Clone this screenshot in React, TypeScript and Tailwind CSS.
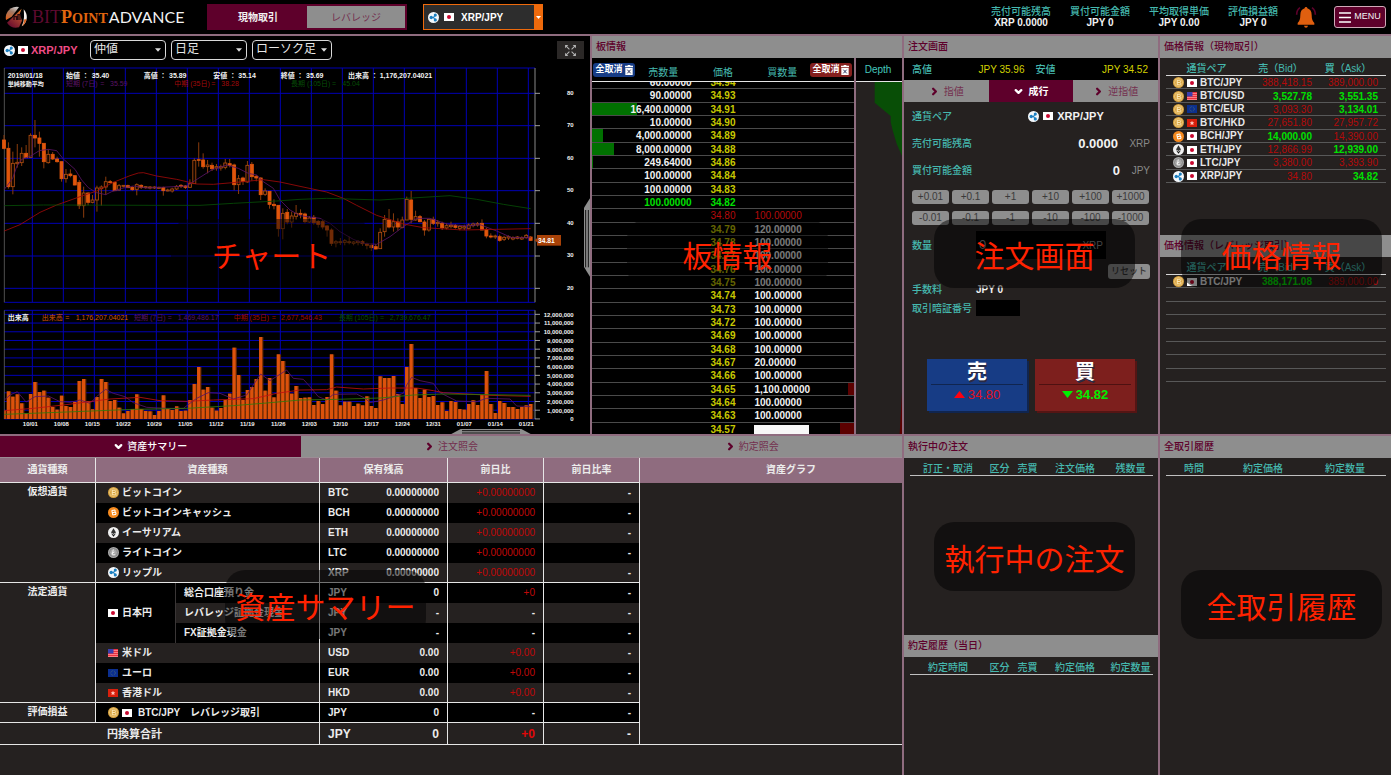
import React from "react";
import { ChevronDown, ChevronRight } from "lucide-react";

/* ---------- icons ---------- */

function CoinIcon({ coin }: { coin: string }) {
  const cls = "h-[11px] w-[11px] shrink-0";
  if (coin === "XRP")
    return (
      <svg viewBox="0 0 22 22" className={cls} aria-hidden="true">
        <circle cx="11" cy="11" r="11" fill="#f4f8fb" />
        <g fill="none" stroke="#1b7fc0" strokeWidth="2.4">
          <path d="M8 11h3l3-4.5M11 11l3 4.5" />
        </g>
        <circle cx="6.5" cy="11" r="3.4" fill="#1b7fc0" />
        <circle cx="14.6" cy="6.2" r="3.1" fill="#1b7fc0" />
        <circle cx="14.6" cy="15.8" r="3.1" fill="#1b7fc0" />
      </svg>
    );
  if (coin === "ETH")
    return (
      <svg viewBox="0 0 22 22" className={cls} aria-hidden="true">
        <circle cx="11" cy="11" r="11" fill="#f2f2f2" />
        <path d="M11 2.5 16 11l-5 3-5-3z" fill="#333" />
        <path d="m6 12.5 5 3 5-3-5 7z" fill="#111" />
      </svg>
    );
  if (coin === "LTC")
    return (
      <svg viewBox="0 0 22 22" className={cls} aria-hidden="true">
        <circle cx="11" cy="11" r="11" fill="#a9a9a9" />
        <circle cx="11" cy="11" r="8" fill="none" stroke="#7d7d7d" strokeWidth="1.5" />
        <path d="M10.5 5 8.5 15.5h6M7 12.5l6-2.5" fill="none" stroke="#f1f1f1" strokeWidth="2" />
      </svg>
    );
  const bch = coin === "BCH";
  return (
    <svg viewBox="0 0 22 22" className={cls} aria-hidden="true">
      <circle cx="11" cy="11" r="11" fill={bch ? "#f58a1f" : "#d9a441"} />
      {!bch && <circle cx="11" cy="11" r="8" fill="none" stroke="#f2d08a" strokeWidth="1.5" />}
      <path
        d="M8.5 6v10M8.5 6.5h4q2.5 0 2.5 2.2T12.5 11h-4M8.5 11h4.5q2.5 0 2.5 2.4T13 15.5H8.5"
        fill="none"
        stroke={bch ? "#fff" : "#fbe7b5"}
        strokeWidth="2"
        transform={bch ? "rotate(-12 11 11)" : undefined}
      />
    </svg>
  );
}

function Flag({ code }: { code: string }) {
  const cls = "h-[8px] w-[10px] shrink-0";
  if (code === "USD")
    return (
      <svg viewBox="0 0 20 16" preserveAspectRatio="none" className={cls} aria-hidden="true">
        <rect width="20" height="16" fill="#ff7d84" />
        <path d="M0 1h20M0 5h20M0 9h20M0 13h20" stroke="#e8323f" strokeWidth="2" />
        <rect width="11" height="9" fill="#3b3fae" />
      </svg>
    );
  if (code === "EUR")
    return (
      <svg viewBox="0 0 20 16" preserveAspectRatio="none" className={cls} aria-hidden="true">
        <rect width="20" height="16" fill="#0b2f8f" />
        <circle cx="10" cy="8" r="4.5" fill="none" stroke="#5f7a6a" strokeWidth="1.5" strokeDasharray="1.5 1.5" />
      </svg>
    );
  if (code === "HKD")
    return (
      <svg viewBox="0 0 20 16" preserveAspectRatio="none" className={cls} aria-hidden="true">
        <rect width="20" height="16" fill="#d91f0c" />
        <path d="m10 3.5 1.4 2.8 3.1.3-2.2 2.1.7 3.2-3-1.6-3 1.6.7-3.200-2.200-2.100 3.100-.3z" fill="#ffc9bf" />
      </svg>
    );
  return (
    <svg viewBox="0 0 20 16" preserveAspectRatio="none" className={cls} aria-hidden="true">
      <rect width="20" height="16" fill="#fff" />
      <circle cx="10" cy="8" r="4" fill="#c9082f" />
    </svg>
  );
}

function TrashIcon() {
  return (
    <svg viewBox="0 0 24 30" className="h-[10px] w-[8px] shrink-0" aria-hidden="true">
      <path d="M0 2h24v5H0zM8 0h8v3H8zM1 9h22v21H1z" fill="#fff" />
      <path d="m7 14 10 11M17 14 7 25" stroke="#333a66" strokeWidth="3" />
    </svg>
  );
}

function LogoMark() {
  return (
    <svg viewBox="0 0 66 66" className="h-[22px] w-[22px]" aria-hidden="true">
      <defs>
        <linearGradient id="mark-top" x1="0.6" y1="0" x2="0.2" y2="1">
          <stop offset="0" stopColor="#c9c4c0" />
          <stop offset="0.35" stopColor="#a07a68" />
          <stop offset="1" stopColor="#e0601a" />
        </linearGradient>
        <linearGradient id="mark-low" x1="0.9" y1="0" x2="0.2" y2="1">
          <stop offset="0" stopColor="#f0882a" />
          <stop offset="0.45" stopColor="#a03a2e" />
          <stop offset="1" stopColor="#66092f" />
        </linearGradient>
      </defs>
      <path d="M3 42A33 33 0 0 1 42 3L34 14 20 32z" fill="url(#mark-top)" />
      <path d="M6 50 50 8l-6 16 7 20-9 20A33 33 0 0 1 6 50z" fill="url(#mark-low)" />
      <path d="M56 10a33 33 0 0 1-6 51q7-13 7-28T56 10z" fill="#f6f0ec" />
      <path d="M58 40h7q-3 14-14 21 6-9 7-21z" fill="#d86422" />
      <path d="M27 42V32h8v10M39 42V26h6v16" fill="none" stroke="#2c0c10" strokeWidth="4" />
    </svg>
  );
}

function BellIcon() {
  return (
    <svg viewBox="0 0 60 66" className="h-[22px] w-[22px]" aria-hidden="true">
      <path d="M30 3q4 0 4 4 13 4 13 20 0 17 8 24v5H5v-5q8-7 8-24Q13 11 26 7q0-4 4-4z" fill="#e05f0f" />
      <path d="M24 59h12q-1 6-6 6t-6-6z" fill="#e05f0f" />
      <path d="M12 5Q2 12 2 26M48 5q10 7 10 21" fill="none" stroke="#5e002b" strokeWidth="5" />
    </svg>
  );
}

function ExpandIcon() {
  return (
    <svg viewBox="0 0 24 24" className="h-[13px] w-[13px]" aria-hidden="true">
      <g stroke="#b5b5b5" strokeWidth="2" fill="#b5b5b5">
        <path d="M10 10 4 4M14 10l6-6M10 14l-6 6M14 14l6 6" />
        <path d="M2 2h6L2 8zM22 2v6l-6-6zM2 22v-6l6 6zM22 22h-6l6-6z" strokeWidth="0" />
      </g>
    </svg>
  );
}

/* ---------- shared pieces ---------- */

function PanelTitle({ children }: { children: React.ReactNode }) {
  return (
    <h2 className="flex h-[22px] shrink-0 items-center bg-[#8e8e8e] px-1 pb-px text-[10px] leading-[12px] font-medium text-[#5e002b]">{children}</h2>
  );
}

function Callout({ className, children }: { className: string; children: React.ReactNode }) {
  return (
    <div
      className={
        "pointer-events-none absolute z-10 flex h-[69px] w-[201px] items-center justify-center rounded-[20px] bg-black/50 pt-[6px] text-[30px] leading-none whitespace-nowrap text-[#ff2200] " +
        className
      }
    >
      {children}
    </div>
  );
}

function PlainSelect({ value, label, width }: { value: string; label: string; width: string }) {
  return (
    <div className={"relative " + width}>
      <select
        aria-label={label}
        className="block h-[20px] w-full appearance-none rounded-[4px] border border-[#d8d8d8] bg-black pb-[2px] pl-[3px] text-[12px] leading-none text-[#e8e8e8]"
      >
        <option>{value}</option>
      </select>
      <svg viewBox="0 0 10 6" className="pointer-events-none absolute top-[8px] right-[5px] h-[4px] w-[6px]" aria-hidden="true">
        <path d="M0 0h10L5 6z" fill="#ddd" />
      </svg>
    </div>
  );
}

/* ---------- chart: three drawing units to the pixel ---------- */

const PITCH = 13.277;
const barX = (k: number) => 12 + PITCH * k;

const volumeTops = [
  332, 274, 290, 283, 310, 340, 282, 246, 276, 272, 293, 321, 329, 287, 318, 321, 306, 243, 237, 304, 328, 291, 237, 246, 303, 300, 323, 340, 333,
  327, 283, 327, 333, 334, 345, 333, 286, 327, 330, 319, 333, 332, 300, 252, 201, 269, 261, 323, 332, 324, 300, 281, 143, 225, 300, 270, 261, 237,
  111, 272, 234, 292, 163, 183, 222, 281, 258, 294, 293, 292, 315, 303, 312, 291, 163, 272, 316, 305, 305, 318, 311, 316, 289, 318, 324, 229, 234,
  234, 228, 282, 312, 201, 132, 264, 294, 269, 291, 288, 315, 307, 333, 303, 306, 327, 329, 312, 301, 315, 285, 213, 312, 339, 303, 309, 321, 321,
  327, 321, 316, 312,
];

/* high, body top, body bottom, low, falling */
const candles: number[][] = [
  [225, 240, 265, 268, 1], [247, 265, 380, 386, 1], [275, 310, 380, 403, 0], [252, 307, 311, 323, 0], [262, 280, 308, 318, 0],
  [255, 280, 293, 293, 1], [220, 226, 292, 292, 0], [180, 226, 234, 262, 1], [215, 234, 250, 290, 1], [250, 250, 305, 325, 1],
  [268, 283, 308, 311, 0], [276, 283, 297, 300, 1], [290, 297, 305, 308, 1], [305, 305, 356, 365, 1], [327, 343, 356, 368, 0],
  [328, 342, 347, 352, 1], [346, 347, 375, 376, 1], [360, 367, 437, 447, 1], [380, 399, 437, 473, 0], [397, 399, 427, 436, 1],
  [405, 420, 427, 430, 0], [377, 384, 420, 455, 0], [376, 381, 386, 437, 0], [350, 365, 381, 405, 0], [360, 365, 368, 370, 1],
  [367, 367, 392, 393, 1], [372, 377, 390, 392, 0], [375, 376, 379, 382, 0], [374, 377, 383, 384, 1], [379, 382, 389, 392, 1],
  [370, 374, 388, 406, 0], [373, 376, 382, 387, 1], [378, 380, 383, 386, 0], [378, 381, 384, 388, 0], [379, 381, 384, 387, 0],
  [380, 382, 385, 387, 0], [380, 383, 392, 407, 1], [386, 390, 393, 394, 0], [383, 387, 393, 398, 0], [375, 379, 387, 390, 0],
  [372, 376, 379, 384, 1], [375, 378, 382, 387, 1], [358, 371, 382, 384, 0], [295, 301, 371, 371, 0], [247, 299, 301, 320, 1],
  [280, 300, 320, 326, 1], [300, 315, 320, 340, 0], [308, 316, 326, 333, 1], [312, 320, 324, 332, 0], [314, 320, 324, 332, 0],
  [297, 309, 322, 328, 0], [297, 311, 316, 322, 1], [311, 315, 374, 391, 1], [345, 356, 374, 402, 0], [350, 354, 364, 375, 1],
  [303, 316, 366, 368, 0], [306, 313, 350, 362, 1], [345, 349, 354, 364, 1], [352, 354, 404, 420, 1], [385, 393, 403, 408, 0],
  [393, 394, 433, 446, 1], [418, 433, 437, 448, 1], [435, 436, 506, 530, 1], [445, 460, 506, 538, 0], [447, 457, 486, 493, 1],
  [455, 468, 486, 503, 0], [435, 460, 469, 480, 0], [448, 460, 463, 475, 1], [458, 462, 485, 490, 1], [468, 474, 486, 489, 0],
  [465, 472, 488, 494, 1], [480, 484, 493, 503, 1], [480, 485, 501, 508, 1], [495, 498, 510, 530, 1], [505, 510, 550, 558, 1],
  [540, 545, 549, 562, 0], [534, 545, 548, 555, 0], [537, 542, 547, 556, 0], [530, 545, 548, 553, 0], [543, 546, 550, 556, 0],
  [540, 544, 548, 556, 0], [540, 545, 551, 558, 1], [548, 552, 556, 568, 1], [550, 556, 563, 573, 1], [553, 560, 567, 568, 1],
  [505, 517, 566, 566, 0], [465, 478, 515, 530, 0], [447, 480, 501, 505, 1], [460, 485, 501, 515, 0], [475, 486, 501, 512, 1],
  [470, 480, 502, 505, 0], [410, 418, 480, 480, 0], [393, 420, 478, 490, 1], [452, 470, 480, 482, 0], [465, 470, 485, 487, 1],
  [480, 486, 510, 527, 1], [476, 478, 510, 515, 0], [470, 478, 490, 495, 1], [480, 487, 491, 500, 0], [485, 490, 503, 510, 1],
  [490, 497, 504, 508, 0], [485, 496, 500, 505, 0], [492, 497, 502, 506, 1], [495, 499, 505, 511, 0], [494, 500, 504, 510, 0],
  [490, 495, 505, 508, 0], [488, 492, 497, 502, 0], [486, 491, 495, 500, 0], [478, 490, 510, 511, 1], [503, 508, 528, 535, 1],
  [520, 528, 531, 535, 1], [524, 528, 531, 537, 0], [524, 530, 541, 545, 1], [527, 532, 538, 543, 0], [526, 530, 534, 540, 0],
  [529, 533, 537, 541, 0], [528, 531, 535, 538, 0], [529, 533, 537, 540, 0], [522, 526, 533, 536, 0], [528, 531, 541, 543, 1],
];

const priceLines: [string, string][] = [
  [
    "#5a1466",
    "13,388 38,355 50,320 65,298 92,288 118,272 145,268 170,272 190,297 225,328 245,360 265,383 290,398 317,404 335,395 365,385 400,378 440,384 560,378 600,352 635,330 680,315 715,325 745,340 770,345 790,365 820,385 840,420 870,450 900,467 960,475 990,490 1020,515 1060,538 1090,550 1130,553 1170,530 1210,500 1250,475 1290,475 1340,492 1400,498 1440,494 1490,513 1535,533 1592,533",
  ],
  [
    "#a00a0a",
    "13,513 60,494 120,457 170,435 240,410 290,393 340,367 390,347 415,339 430,338 470,348 530,358 590,372 640,373 720,366 790,359 840,366 900,379 980,396 1030,415 1070,436 1130,466 1180,482 1210,492 1270,503 1390,510 1490,508 1592,506",
  ],
  ["#064d06", "13,437 130,435 470,436 600,436 700,430 830,423 900,418 980,415 1140,420 1220,415 1350,407 1430,418 1510,433 1592,446"],
];

const volumeLines: [string, string][] = [
  [
    "#5a1466",
    "13,300 30,285 52,275 78,306 105,290 145,288 180,305 210,307 240,300 270,310 295,285 317,268 340,280 375,290 400,308 440,322 500,325 550,325 590,295 625,278 660,280 700,297 740,285 770,240 782,222 810,242 860,210 880,235 910,238 930,260 955,290 980,300 1000,283 1070,282 1095,295 1110,308 1150,300 1180,290 1210,280 1220,255 1235,232 1260,242 1300,250 1320,278 1370,303 1430,305 1460,295 1530,297 1550,318 1592,320",
  ],
  [
    "#c01010",
    "13,332 100,325 190,315 330,297 420,292 480,302 560,304 640,300 760,296 830,280 900,270 980,269 1010,261 1090,267 1170,264 1250,264 1300,272 1330,278 1470,286 1592,289",
  ],
  ["#2f7a0a", "13,343 200,336 400,328 560,325 700,317 800,309 900,300 1010,298 1140,294 1240,285 1330,282 1470,284 1592,286"],
];

const chartDates = [
  "10/01", "10/08", "10/15", "10/22", "10/29", "11/05", "11/12", "11/19", "11/26", "12/03", "12/10", "12/17", "12/24", "12/31", "01/07", "01/14", "01/21",
];

const W = "#f2f2f2";
const chartCaptions: [number, number, string, string][] = [
  [23, 233, W, "2019/01/18"],
  [198, 233, W, "始値 ："],
  [275, 233, W, "35.40"],
  [431, 233, W, "高値 ："],
  [507, 233, W, "35.89"],
  [640, 233, W, "安値 ："],
  [715, 233, W, "35.14"],
  [842, 233, W, "終値 ："],
  [918, 233, W, "35.69"],
  [1044, 233, W, "出来高 ："],
  [1139, 233, W, "1,176,207.04021"],
  [23, 259, W, "単純移動平均"],
  [198, 259, "#5a1466", "短期 (7日)"],
  [301, 259, "#5a1466", "="],
  [330, 259, "#5a1466", "35.59"],
  [523, 259, "#a00a0a", "中期 (35日)"],
  [634, 259, "#a00a0a", "="],
  [664, 259, "#a00a0a", "38.28"],
  [873, 259, "#064d06", "長期 (105日)"],
  [996, 259, "#064d06", "="],
  [1027, 259, "#064d06", "45.04"],
  [23, 960, W, "出来高"],
  [125, 960, "#d4550f", "出来高"],
  [196, 960, "#d4550f", "="],
  [227, 960, "#d4550f", "1,176,207.04021"],
  [402, 960, "#5a1466", "短期 (7日)"],
  [503, 960, "#5a1466", "="],
  [533, 960, "#5a1466", "1,469,486.17"],
  [701, 960, "#a00a0a", "中期 (35日)"],
  [815, 960, "#a00a0a", "="],
  [843, 960, "#a00a0a", "2,677,546.43"],
  [1016, 960, "#064d06", "長期 (105日)"],
  [1140, 960, "#064d06", "="],
  [1169, 960, "#064d06", "2,739,676.47"],
];

function Chart() {
  const columns = chartDates.map((_, i) => 97 + 93 * i);
  return (
    <svg viewBox="0 192 1770 1110" className="block h-auto w-full" role="img" aria-label="XRP/JPY チャート">
      <g stroke="#0000b4" strokeWidth="3">
        {columns.map((x) => (
          <path key={x} d={`M${x} 204V907M${x} 931V1257`} />
        ))}
        {[204, 280, 377, 475, 572, 670, 768, 865, 907, 931].map((y) => (
          <path key={y} d={`M13 ${y}H1605`} />
        ))}
        {Array.from({ length: 13 }, (_, i) => (
          <path key={i} d={`M13 ${943 + i * 26.15}H1605`} />
        ))}
      </g>
      <path d="M13 204V907M13 931V1257" stroke="#777" strokeWidth="2" />

      <g transform="translate(0 180)">
        {candles.map(([hi, top, bottom, lo, falling], k) => {
          const x = barX(k);
          return (
            <g key={k} strokeWidth="2.5">
              <path d={`M${x} ${hi}V${top}M${x} ${bottom}V${lo}`} stroke="#8a3c0c" strokeWidth="3" />
              <rect
                x={x - 4.5}
                y={top}
                width="9"
                height={Math.max(2, bottom - top)}
                fill={falling ? "#e0560c" : "#120600"}
                stroke={falling ? "#e0560c" : "#b04e10"}
              />
            </g>
          );
        })}
        {priceLines.map(([color, points]) => (
          <polyline key={color} points={points} fill="none" stroke={color} strokeWidth="2.5" />
        ))}
      </g>

      <g transform="translate(0 900)">
        {volumeTops.map((top, k) => {
          const x = Math.max(13, barX(k) - 5);
          return (
            <g key={k}>
              <rect x={x} y={top} width={k ? 13 : 6} height={357 - top} fill="#6b2a04" />
              <rect x={x} y={top} width={k ? 9.5 : 4} height={357 - top} fill="#dc520c" />
            </g>
          );
        })}
        {volumeLines.map(([color, points]) => (
          <polyline key={color} points={points} fill="none" stroke={color} strokeWidth="2.5" />
        ))}
      </g>

      <path d="M1605 204V907M1605 931V1257" stroke="#666" strokeWidth="4" />
      <g stroke="#bbb" strokeWidth="2.5">
        {[280, 377, 475, 572, 670, 768, 865].map((y) => (
          <path key={y} d={`M1605 ${y}H1620`} />
        ))}
        {Array.from({ length: 13 }, (_, i) => (
          <path key={i} d={`M1605 ${943 + i * 26.15}H1620`} />
        ))}
      </g>
      <g fill="#f2f2f2" fontSize="18" fontWeight="700">
        {[80, 70, 60, 50, 40, 30, 20].map((p, i) => (
          <text key={p} x="1721" y={284 + i * 97.5} textAnchor="end">
            {p}
          </text>
        ))}
        {Array.from({ length: 13 }, (_, i) => (
          <text key={i} x="1721" y={950 + i * 26.15} textAnchor="end">
            {((12 - i) * 1000000).toLocaleString("en-US")}
          </text>
        ))}
        {chartDates.map((d, i) => (
          <text key={d} x={91 + 93 * i} y="1277" textAnchor="middle">
            {d}
          </text>
        ))}
      </g>
      <rect x="1611" y="705" width="72" height="32" fill="#a84208" />
      <path d="m1603 721 8-6v12z" fill="#a84208" />
      <text x="1614" y="728" fill="#fff" fontSize="20" fontWeight="700">
        34.81
      </text>
      {chartCaptions.map(([x, y, color, text]) => (
        <text key={`${x}-${y}`} x={x} y={y} fill={color} fontSize={text.includes("純") ? 18 : 21} fontWeight={color === W ? 700 : 400}>
          {text}
        </text>
      ))}

      <path d="m1770 595-18 28v178l18 29z" fill="#8e8e8e" />
      <path d="M1757 630V802M1765 630V802" stroke="#111" strokeWidth="3" />
      <path d="m1354 1302 28-15h182l28 15z" fill="#8e8e8e" />
      <path d="M1386 1292H1560M1386 1299H1560" stroke="#111" strokeWidth="3" />
    </svg>
  );
}

/* ---------- header ---------- */

const balances = [
  ["売付可能残高", "XRP 0.0000"],
  ["買付可能金額", "JPY 0"],
  ["平均取得単価", "JPY 0.00"],
  ["評価損益額", "JPY 0"],
];

function Header() {
  return (
    <header className="flex h-[36px] shrink-0 items-center border-b-2 border-[#8f6c7f] bg-black pr-[5px] pl-[5px]">
      <a href="#" className="flex w-[202px] items-center gap-[5px]" aria-label="BITPoint ADVANCE">
        <LogoMark />
        <span className="flex items-baseline text-[18px] leading-none">
          <span className="font-[Liberation_Serif,serif] text-[#5e0a30]">BIT</span>
          <span className="font-[Liberation_Serif,serif] font-bold text-[#e2660f]">P</span>
          <span className="font-[Liberation_Serif,serif] text-[14px] font-bold text-[#e2660f]">OINT</span>
          <span className="pl-px font-[Lato,sans-serif] text-[16px] text-[#f2f2f2]">ADVANCE</span>
        </span>
      </a>
      <div className="grid h-[26px] w-[200px] grid-cols-2 border-2 border-[#5e002b] bg-[#5e002b] text-[10px]">
        <button type="button" className="font-bold text-[#f2f2f2]">
          現物取引
        </button>
        <button type="button" className="bg-[#8e8e8e] text-[#74304f]">
          レバレッジ
        </button>
      </div>
      <div className="relative ml-[16px] flex h-[26px] w-[120px] items-center gap-[5px] border border-[#ee6a0c] bg-[#2d2d2d] pl-[4px]">
        <CoinIcon coin="XRP" />
        <Flag code="JPY" />
        <select aria-label="通貨ペア" className="h-full min-w-0 flex-1 appearance-none bg-transparent pl-[2px] text-[10px] font-bold text-white">
          <option>XRP/JPY</option>
        </select>
        <span className="flex h-full w-[8px] items-center justify-center bg-[#ee6a0c]">
          <svg viewBox="0 0 10 6" className="h-[3px] w-[5px]" aria-hidden="true">
            <path d="M0 0h10L5 6z" fill="#fff" />
          </svg>
        </span>
      </div>
      <dl className="ml-auto flex gap-[19px] text-center text-[10px] leading-[11px] whitespace-nowrap">
        {balances.map(([name, value]) => (
          <div key={name}>
            <dt className="font-medium text-[#45b8ae]">{name}</dt>
            <dd className="font-bold text-[#f2f2f2]">{value}</dd>
          </div>
        ))}
      </dl>
      <button type="button" aria-label="お知らせ" className="ml-[17px]">
        <BellIcon />
      </button>
      <button
        type="button"
        className="ml-[17px] flex h-[22px] w-[52px] items-center justify-center gap-[3px] rounded-[3px] border border-[#cfa9b8] bg-[#5e002b] text-[9px] text-[#f2f2f2]"
      >
        <svg viewBox="0 0 12 11" className="h-[11px] w-[12px]" aria-hidden="true">
          <path d="M0 1h12M0 5.5h12M0 10h12" stroke="#fff" strokeWidth="1.5" />
        </svg>
        MENU
      </button>
    </header>
  );
}

/* ---------- order book ---------- */

type BookRow = { sell?: string; price: string; buy?: string; tone?: "best-ask" | "best-bid" };

const bookRows: BookRow[] = [
  { sell: "60.00000", price: "34.94" },
  { sell: "90.00000", price: "34.93" },
  { sell: "16,400.00000", price: "34.91" },
  { sell: "10.00000", price: "34.90" },
  { sell: "4,000.00000", price: "34.89" },
  { sell: "8,000.00000", price: "34.88" },
  { sell: "249.64000", price: "34.86" },
  { sell: "100.00000", price: "34.84" },
  { sell: "100.00000", price: "34.83" },
  { sell: "100.00000", price: "34.82", tone: "best-ask" },
  { price: "34.80", buy: "100.00000", tone: "best-bid" },
  { price: "34.79", buy: "120.00000" },
  { price: "34.78", buy: "100.00000" },
  { price: "34.77", buy: "100.00000" },
  { price: "34.76", buy: "100.00000" },
  { price: "34.75", buy: "100.00000" },
  { price: "34.74", buy: "100.00000" },
  { price: "34.73", buy: "100.00000" },
  { price: "34.72", buy: "100.00000" },
  { price: "34.69", buy: "100.00000" },
  { price: "34.68", buy: "100.00000" },
  { price: "34.67", buy: "20.00000" },
  { price: "34.66", buy: "100.00000" },
  { price: "34.65", buy: "1,100.00000" },
  { price: "34.64", buy: "100.00000" },
  { price: "34.63", buy: "100.00000" },
  { price: "34.57" },
];

const toNumber = (s?: string) => Number((s ?? "0").replace(/,/g, ""));

function OrderBook() {
  const head = "flex h-[14px] w-[42px] shrink-0 items-center justify-center gap-[2px] rounded-[3px] text-[9px] leading-none font-bold text-white ";
  return (
    <section className="relative flex min-w-0 flex-1 flex-col">
      <PanelTitle>板情報</PanelTitle>
      <div className="flex min-h-0 flex-1">
        <div className="flex min-w-0 flex-1 flex-col bg-black">
          <div className="grid h-[24px] shrink-0 grid-cols-[100fr_63fr_100fr] border-b border-[#e6e6e6] text-[10px] text-[#45b8ae]">
            <div className="flex items-center pl-px">
              <button type="button" className={head + "bg-[#173c85]"}>
                全取消
                <TrashIcon />
              </button>
              <span className="flex-1 pt-[5px] text-center">売数量</span>
            </div>
            <span className="flex items-center justify-center pt-[5px]">価格</span>
            <div className="flex items-center pr-[2px]">
              <span className="flex-1 pt-[5px] text-center">買数量</span>
              <button type="button" className={head + "bg-[#85201e]"}>
                全取消
                <TrashIcon />
              </button>
            </div>
          </div>
          <div className="h-[352px] overflow-hidden">
            <table className="-mt-[6px] h-[360px] w-full table-fixed border-separate border-spacing-0 text-[10px] leading-[10px] font-bold text-[#f2f2f2]">
              <colgroup>
                <col className="w-[38%]" />
                <col className="w-[24%]" />
                <col className="w-[38%]" />
              </colgroup>
              <tbody>
                {bookRows.map((r) => {
                  const tone =
                    r.tone === "best-ask" ? "text-[#00e000]" : r.tone === "best-bid" ? "font-normal text-[#b40a0a]" : "";
                  const buyBar = toNumber(r.buy) >= 1000 ? 6 : r.buy ? 0 : 14;
                  return (
                    <tr key={r.price} className={tone}>
                      <td className="relative border-b border-[#4a4a4a] p-0 pt-[2px] text-right">
                        <span className="absolute inset-y-0 left-0 bg-[#007000]" style={{ width: Math.floor(toNumber(r.sell) / 364 + 0.4) }} />
                        <span className="relative">{r.sell}</span>
                      </td>
                      <td className={"border-b border-[#4a4a4a] p-0 pt-[2px] text-center " + (r.tone ? "" : "text-[#c8c800]")}>{r.price}</td>
                      <td className="relative border-b border-[#4a4a4a] p-0 pt-[2px]">
                        {!r.sell && <span className="absolute inset-y-0 right-0 bg-[#5c0000]" style={{ width: buyBar }} />}
                        {r.buy ?? <span className={r.sell ? "" : "block h-[10px] w-[55px] bg-[#f7f7f7]"} />}
                      </td>
                    </tr>
                  );
                })}
              </tbody>
            </table>
          </div>
        </div>
        <div className="flex w-[48px] shrink-0 flex-col border-l-2 border-[#8f6c7f] bg-[#252120]">
          <div className="flex h-[24px] shrink-0 items-center justify-center border-b border-[#e6e6e6] bg-black pr-[2px] text-[10px] text-[#45c8be]">
            Depth
          </div>
          <svg viewBox="0 0 138 1055" preserveAspectRatio="none" className="block h-[352px] w-full" aria-label="Depth" role="img">
            <path d="M56 0H138V222L122 185 110 145 104 120V102L56 62z" fill="#084e06" />
            <path d="M138 930 131 1055H138z" fill="#5c0000" />
          </svg>
        </div>
      </div>
      <Callout className="top-[183px] left-[35px]">板情報</Callout>
    </section>
  );
}

/* ---------- order entry ---------- */

const steps = ["+0.01", "+0.1", "+1", "+10", "+100", "+1000", "-0.01", "-0.1", "-1", "-10", "-100", "-1000"];

function OrderEntry() {
  return (
    <section className="relative flex h-[398px] flex-col bg-[#252120] text-[10px]">
      <PanelTitle>注文画面</PanelTitle>
      <div className="grid h-[22px] shrink-0 grid-cols-2 items-center gap-[11px] bg-black px-2 pr-[10px] font-medium">
        <div className="flex justify-between text-[#45b8ae]">
          高値<span className="text-[#d2d200]">JPY 35.96</span>
        </div>
        <div className="flex justify-between text-[#45b8ae]">
          安値<span className="text-[#d2d200]">JPY 34.52</span>
        </div>
      </div>
      <div className="grid h-[22px] shrink-0 grid-cols-3 bg-[#8e8e8e] text-[#74304f]">
        <button type="button" className="flex items-center justify-center gap-1">
          <ChevronRight size={11} strokeWidth={5} color="#5e002b" />
          指値
        </button>
        <button type="button" className="flex items-center justify-center gap-1 bg-[#5e002b] font-bold text-white">
          <ChevronDown size={11} strokeWidth={5} />
          成行
        </button>
        <button type="button" className="flex items-center justify-center gap-1">
          <ChevronRight size={11} strokeWidth={5} color="#5e002b" />
          逆指値
        </button>
      </div>
      <div className="flex flex-col px-2 font-medium text-[#45b8ae]">
        <div className="flex h-[28px] items-center">
          <span className="w-[64px]">通貨ペア</span>
          <span className="flex flex-1 items-center justify-center gap-[4px] pl-[6px] text-[11px] font-bold text-[#f2f2f2]">
            <CoinIcon coin="XRP" />
            <Flag code="JPY" />
            XRP/JPY
          </span>
        </div>
        <div className="flex h-[27px] items-center">
          売付可能残高
          <span className="ml-auto text-[13px] font-bold text-[#f2f2f2]">0.0000</span>
          <span className="w-[32px] text-right text-[#8a8a8a]">XRP</span>
        </div>
        <div className="flex h-[27px] items-center">
          買付可能金額
          <span className="ml-auto text-[13px] font-bold text-[#f2f2f2]">0</span>
          <span className="w-[30px] text-right text-[#8a8a8a]">JPY</span>
        </div>
        <div className="mt-[6px] mr-px grid grid-cols-6 gap-x-[3px] gap-y-[7px]">
          {steps.map((s) => (
            <button key={s} type="button" className="h-[14px] rounded-[3px] bg-[#8e8e8e] text-[10px] leading-[12px] text-[#3a3a3a]">
              {s}
            </button>
          ))}
        </div>
        <div className="mt-[6px] flex h-[28px] items-center">
          <label htmlFor="qty" className="w-[64px]">
            数量
          </label>
          <div className="flex h-full w-[130px] items-center bg-black px-[3px] text-[#8a8a8a]">
            <input id="qty" defaultValue="0" className="w-full min-w-0 bg-transparent text-[13px] text-[#8a8a8a]" />
            <span>XRP</span>
          </div>
        </div>
        <button type="button" className="mt-[5px] h-[15px] w-[42px] self-end rounded-[3px] bg-[#8e8e8e] text-[9px] leading-none text-[#333]">
          リセット
        </button>
        <div className="flex h-[20px] items-center">
          <span className="w-[64px]">手数料</span>
          <span className="font-bold text-[#f2f2f2]">JPY 0</span>
        </div>
        <div className="mt-px flex h-[16px] items-center">
          <label htmlFor="pin" className="w-[64px] whitespace-nowrap">
            取引暗証番号
          </label>
          <input id="pin" type="password" className="h-[16px] w-[44px] bg-black px-1 text-white" />
        </div>
      </div>
      <div className="mt-[43px] flex justify-center gap-[8px]">
        <button type="button" className="flex h-[52px] w-[100px] flex-col items-center bg-[#173c85] px-1 shadow-[2px_2px_0_#10254f]">
          <span className="flex h-[26px] w-full items-center justify-center border-b border-[#10254f] text-[20px] leading-none font-bold text-white [text-shadow:1px_2px_0_#2a2a44]">
            売
          </span>
          <span className="flex flex-1 items-center gap-[3px] pb-[7px] text-[13px] leading-none text-[#e01020]">
            <svg viewBox="0 0 11 7" className="h-[7px] w-[11px]" aria-hidden="true">
              <path d="M0 7h11L5.5 0z" fill="#ff0010" />
            </svg>
            34.80
          </span>
        </button>
        <button type="button" className="flex h-[52px] w-[100px] flex-col items-center bg-[#7d1f1d] px-1 shadow-[2px_2px_0_#541514]">
          <span className="flex h-[26px] w-full items-center justify-center border-b border-[#4e1111] text-[20px] leading-none font-bold text-white [text-shadow:1px_2px_0_#2a2a44]">
            買
          </span>
          <span className="flex flex-1 items-center gap-[3px] pb-[7px] text-[13px] leading-none font-bold text-[#00f000]">
            <svg viewBox="0 0 11 7" className="h-[7px] w-[11px]" aria-hidden="true">
              <path d="M0 0h11L5.5 7z" fill="#00f000" />
            </svg>
            34.82
          </span>
        </button>
      </div>
      <Callout className="top-[183px] left-[30px]">注文画面</Callout>
    </section>
  );
}

/* ---------- price lists ---------- */

const spot = [
  ["BTC", "JPY", "388,418.15", "389,000.00", "dd"],
  ["BTC", "USD", "3,527.78", "3,551.35", "uu"],
  ["BTC", "EUR", "3,093.30", "3,134.01", "du"],
  ["BTC", "HKD", "27,651.80", "27,957.72", "dd"],
  ["BCH", "JPY", "14,000.00", "14,390.00", "ud"],
  ["ETH", "JPY", "12,866.99", "12,939.00", "du"],
  ["LTC", "JPY", "3,380.00", "3,393.90", "dd"],
  ["XRP", "JPY", "34.80", "34.82", "du"],
];
const leverage = [["BTC", "JPY", "388,171.08", "389,000.00", "ud"], ...Array.from({ length: 7 }, () => ["", "", "", "", "dd"])];

function PriceTable({ rows }: { rows: string[][] }) {
  const tone = (c: string) => (c === "u" ? "font-bold text-[#00e000]" : "text-[#b40a0a]");
  return (
    <div className="pr-[5px] pl-[6px]">
      <table className="h-[125px] w-full table-fixed border-separate border-spacing-0 text-[10px] leading-[10px]">
        <colgroup>
          <col className="w-[81px]" />
          <col />
          <col className="w-[74px]" />
        </colgroup>
        <thead className="text-[#45b8ae]">
          <tr className="h-[18px]">
            <th className="border-b border-[#d6d6d6] p-0 pt-[5px] font-medium">通貨ペア</th>
            <th className="border-b border-[#d6d6d6] p-0 pt-[5px] pl-[2px] font-medium">売（Bid）</th>
            <th className="border-b border-[#d6d6d6] p-0 pt-[5px] pr-[2px] font-medium">買（Ask）</th>
          </tr>
        </thead>
        <tbody>
          {rows.map(([coin, ccy, bid, ask, dir], i) => (
            <tr key={i} className="h-[13px]">
              <td className="border-b border-[#585858] p-0 pt-px pl-[7px]">
                {coin && (
                  <span className="flex items-center gap-[3px] font-bold whitespace-nowrap text-[#e8e8e8]">
                    <CoinIcon coin={coin} />
                    <Flag code={ccy} />
                    {coin}/{ccy}
                  </span>
                )}
              </td>
              <td className={"border-b border-[#585858] p-0 pt-[2px] text-right " + tone(dir[0])}>{bid}</td>
              <td className={"border-b border-[#585858] p-0 pt-[2px] pr-[8px] text-right " + tone(dir[1])}>{ask}</td>
            </tr>
          ))}
        </tbody>
      </table>
    </div>
  );
}

/* ---------- empty history tables ---------- */

function HeadOnlyTable({ heads, cols }: { heads: string[]; cols: string[] }) {
  return (
    <div className="pr-[5px] pl-[6px]">
      <table className="w-full table-fixed border-separate border-spacing-0 text-[10px] leading-[10px] text-[#45b8ae]">
        <colgroup>
          {cols.map((c, i) => (
            <col key={i} className={c} />
          ))}
        </colgroup>
        <thead>
          <tr className="h-[18px]">
            {heads.map((h) => (
              <th key={h} className="border-b border-[#c0c0c0] p-0 pt-[5px] font-medium whitespace-nowrap">
                {h}
              </th>
            ))}
          </tr>
        </thead>
      </table>
    </div>
  );
}

/* ---------- asset summary ---------- */

type AssetRow = {
  group?: [string, number];
  coin?: string;
  flag?: string;
  name?: string;
  sub?: string;
  span?: number;
  ccy: string;
  value: string;
  diff: string;
  dark?: boolean;
  last?: boolean;
};

const Z = "0.00000000";
const assets: AssetRow[] = [
  { group: ["仮想通貨", 5], coin: "BTC", name: "ビットコイン", ccy: "BTC", value: Z, diff: "+" + Z },
  { coin: "BCH", name: "ビットコインキャッシュ", ccy: "BCH", value: Z, diff: "+" + Z, dark: true },
  { coin: "ETH", name: "イーサリアム", ccy: "ETH", value: Z, diff: "+" + Z },
  { coin: "LTC", name: "ライトコイン", ccy: "LTC", value: Z, diff: "+" + Z, dark: true },
  { coin: "XRP", name: "リップル", ccy: "XRP", value: Z, diff: "+" + Z, last: true },
  { group: ["法定通貨", 6], flag: "JPY", name: "日本円", span: 3, sub: "総合口座預り金", ccy: "JPY", value: "0", diff: "+0", dark: true },
  { sub: "レバレッジ証拠金現金", ccy: "JPY", value: "-", diff: "-" },
  { sub: "FX証拠金現金", ccy: "JPY", value: "-", diff: "-", dark: true },
  { flag: "USD", name: "米ドル", ccy: "USD", value: "0.00", diff: "+0.00" },
  { flag: "EUR", name: "ユーロ", ccy: "EUR", value: "0.00", diff: "+0.00", dark: true },
  { flag: "HKD", name: "香港ドル", ccy: "HKD", value: "0.00", diff: "+0.00", last: true },
  { group: ["評価損益", 1], coin: "BTC", flag: "JPY", name: "BTC/JPY　レバレッジ取引", ccy: "JPY", value: "0", diff: "-", dark: true, last: true },
];

const heads: [string, number][] = [
  ["通貨種類", 1],
  ["資産種類", 2],
  ["保有残高", 1],
  ["前日比", 1],
  ["前日比率", 1],
];

function AssetSummary() {
  const line = "border-[#e6e6e6]";
  return (
    <section className="relative flex flex-1 flex-col bg-[#252120]">
      <div className="grid h-[22px] shrink-0 grid-cols-3 border-b border-[#9d8c95] bg-[#8e8e8e] text-[10px] text-[#74304f]">
        <button type="button" className="flex items-center justify-center gap-[3px] bg-[#5e002b] font-medium text-white">
          <ChevronDown size={11} strokeWidth={5} />
          資産サマリー
        </button>
        <button type="button" className="flex items-center justify-center gap-[3px]">
          <ChevronRight size={11} strokeWidth={5} color="#5e002b" />
          注文照会
        </button>
        <button type="button" className="flex items-center justify-center gap-[3px]">
          <ChevronRight size={11} strokeWidth={5} color="#5e002b" />
          約定照会
        </button>
      </div>
      <div className={"flex border-b " + line}>
        <table className="w-[640px] shrink-0 table-fixed border-separate border-spacing-0 text-[10px] leading-[10px] font-bold text-[#ececec]">
          <colgroup>
            <col className="w-[96px]" />
            <col className="w-[80px]" />
            <col className="w-[144px]" />
            <col className="w-[128px]" />
            <col className="w-[96px]" />
            <col className="w-[96px]" />
          </colgroup>
          <thead className="bg-[#8f6c7f]">
            <tr className="h-[25px]">
              {heads.map(([h, span]) => (
                <th key={h} colSpan={span} className={"border-r border-b p-0 " + line}>
                  {h}
                </th>
              ))}
            </tr>
          </thead>
          <tbody>
            {assets.map((a, i) => {
              const bg = a.dark ? "bg-black" : "bg-[#252120]";
              const edge = a.last ? "border-b " + line + " " : "pb-px ";
              return (
                <tr key={i} className="h-[20px]">
                  {a.group && (
                    <td rowSpan={a.group[1]} className={"border-r border-b p-0 pt-[4px] text-center align-top " + line}>
                      {a.group[0]}
                    </td>
                  )}
                  {a.name && (
                    <td
                      rowSpan={a.span}
                      colSpan={a.sub ? 1 : 2}
                      className={"pl-[12px] " + edge + bg + (a.sub ? " border-r border-[#3a3636]" : " border-r " + line)}
                    >
                      <span className="flex items-center gap-[3px]">
                        {a.coin && <CoinIcon coin={a.coin} />}
                        {a.flag && <Flag code={a.flag} />}
                        <span className={a.flag ? (a.coin ? "pl-[3px]" : "pl-px") : ""}>{a.name}</span>
                      </span>
                    </td>
                  )}
                  {a.sub && <td className={"border-r pb-px pl-[8px] whitespace-nowrap " + line + " " + bg}>{a.sub}</td>}
                  <td className={"border-r px-[8px] " + edge + line + " " + bg}>
                    <span className="flex justify-between">
                      <span>{a.ccy}</span>
                      <span>{a.value}</span>
                    </span>
                  </td>
                  <td
                    className={"border-r pr-[8px] text-right " + edge + line + " " + bg + (a.diff === "-" ? "" : " font-normal text-[#c00808]")}
                  >
                    {a.diff}
                  </td>
                  <td className={"border-r pr-[8px] text-right " + edge + line + " " + bg}>-</td>
                </tr>
              );
            })}
            <tr className="h-[21px] text-[12px] leading-[12px]">
              <td colSpan={3} className={"border-r p-0 pl-[107px] text-[11px] " + line}>
                円換算合計
              </td>
              <td className={"border-r p-0 px-[8px] " + line}>
                <span className="flex justify-between">
                  <span>JPY</span>
                  <span>0</span>
                </span>
              </td>
              <td className={"border-r p-0 pr-[8px] text-right text-[#e00808] " + line}>+0</td>
              <td className={"border-r p-0 pr-[8px] text-right " + line}>-</td>
            </tr>
          </tbody>
        </table>
        <div className="min-w-0 flex-1">
          <h3 className="flex h-[25px] items-center justify-center bg-[#8f6c7f] pb-[2px] pl-[40px] text-[10px] font-bold text-[#ececec]">資産グラフ</h3>
        </div>
      </div>
      <Callout className="top-[134px] left-[225px]">資産サマリー</Callout>
    </section>
  );
}

/* ---------- page ---------- */

export default function App() {
  const orderCols = ["w-[76px]", "w-[27px]", "w-[29px]", "w-[66px]", ""];
  return (
    <div className="flex min-h-screen flex-col bg-[#252120] font-[Liberation_Sans,Noto_Sans_CJK_JP,sans-serif] text-white" lang="ja">
      <Header />
      <main className="grid flex-1 grid-cols-[minmax(0,1fr)_256px_233px]">
        <div className="flex min-w-0 flex-col">
          <div className="flex h-[400px] border-b-2 border-[#8f6c7f]">
            <section className="relative w-[592px] shrink-0 border-r-2 border-[#8f6c7f] bg-black">
              <div className="flex h-[28px] items-center gap-[5px] pr-[6px] pl-[4px]">
                <div className="flex w-[81px] items-center gap-[3px] text-[11px] font-bold text-[#f04c86]">
                  <CoinIcon coin="XRP" />
                  <Flag code="JPY" />
                  XRP/JPY
                </div>
                <PlainSelect label="価格種別" value="仲値" width="w-[76px]" />
                <PlainSelect label="足種" value="日足" width="w-[76px]" />
                <PlainSelect label="チャート種別" value="ローソク足" width="w-[80px]" />
                <button type="button" aria-label="拡大" className="ml-auto flex h-[18px] w-[27px] items-center justify-center bg-[#2b2827]">
                  <ExpandIcon />
                </button>
              </div>
              <Chart />
              <Callout className="top-[183px] left-[171px]">チャート</Callout>
            </section>
            <OrderBook />
          </div>
          <AssetSummary />
        </div>

        <div className="flex flex-col border-l-2 border-[#8f6c7f]">
          <OrderEntry />
          <section className="relative h-[201px] border-t-2 border-[#8f6c7f]">
            <PanelTitle>執行中の注文</PanelTitle>
            <HeadOnlyTable heads={["訂正・取消", "区分", "売買", "注文価格", "残数量"]} cols={orderCols} />
            <Callout className="top-[86px] left-[30px]">執行中の注文</Callout>
          </section>
          <section>
            <PanelTitle>約定履歴（当日）</PanelTitle>
            <HeadOnlyTable heads={["約定時間", "区分", "売買", "約定価格", "約定数量"]} cols={orderCols} />
          </section>
        </div>

        <div className="flex flex-col border-l-2 border-[#8f6c7f]">
          <div className="relative h-[398px]">
            <section className="h-[199px]">
              <PanelTitle>価格情報（現物取引）</PanelTitle>
              <PriceTable rows={spot} />
            </section>
            <section>
              <PanelTitle>価格情報（レバレッジ取引）</PanelTitle>
              <PriceTable rows={leverage} />
            </section>
            <Callout className="top-[183px] left-[21px]">価格情報</Callout>
          </div>
          <section className="relative flex-1 border-t-2 border-[#8f6c7f]">
            <PanelTitle>全取引履歴</PanelTitle>
            <HeadOnlyTable heads={["時間", "約定価格", "約定数量"]} cols={["w-[56px]", "w-[82px]", ""]} />
            <Callout className="top-[134px] left-[21px]">全取引履歴</Callout>
          </section>
        </div>
      </main>
    </div>
  );
}
